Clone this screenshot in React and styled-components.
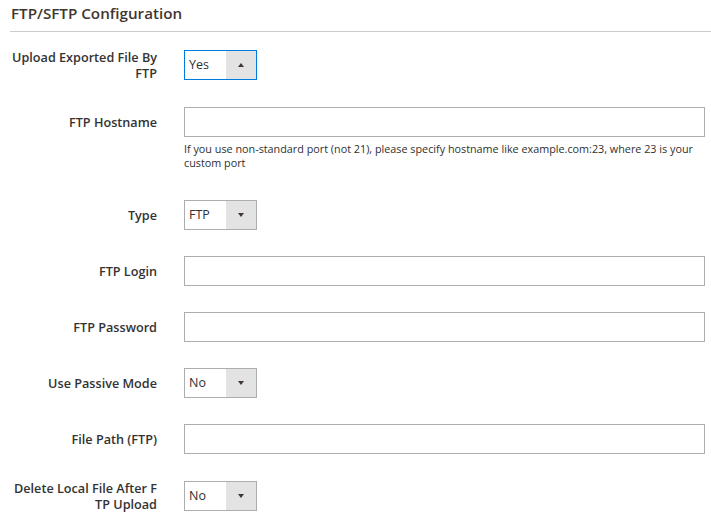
import React from 'react'
import styled, { createGlobalStyle } from 'styled-components'

const GlobalStyle = createGlobalStyle`
  html, body {
    margin: 0;
    padding: 0;
    background: #ffffff;
  }
  body {
    font-family: "Open Sans", "Liberation Sans", sans-serif;
    color: #303030;
  }
`

const Section = styled.div`
  width: 711px;
  padding: 0 6px 0 9px;
  box-sizing: border-box;
`

const Title = styled.div`
  font-size: 15.2px;
  font-weight: 600;
  color: #41362f;
  line-height: 20px;
  padding: 3px 0 8px 1px;
  border-bottom: 1px solid #cccccc;
  margin-left: 1px;
  margin-right: -6px;
`

const Form = styled.div`
  display: flex;
  flex-direction: column;
  gap: 26px;
  padding-top: 17px;
`

const Row = styled.div`
  display: grid;
  grid-template-columns: 148px 1fr;
  column-gap: 27px;
  align-items: center;
`

const Label = styled.label`
  font-size: 12.65px;
  font-weight: 600;
  line-height: 16px;
  color: #333333;
  text-align: right;
  word-break: break-all;
  align-self: ${p => (p.top ? 'start' : 'center')};
  padding-top: ${p => (p.top ? '7px' : '0')};
`

const Field = styled.div`
  display: flex;
  flex-direction: column;
`

const Input = styled.input`
  box-sizing: border-box;
  width: 521px;
  height: 30px;
  border: 1px solid #adadad;
  background: #fff;
  padding: 0 8px;
  font-family: inherit;
  font-size: 12px;
  outline: none;
`

const Note = styled.div`
  font-size: 10.8px;
  line-height: 14px;
  color: #303030;
  margin-top: 5px;
  padding-bottom: 4px;
`

const Select = styled.div`
  box-sizing: border-box;
  width: 73px;
  height: 30px;
  display: flex;
  border: 1px solid ${p => (p.active ? '#007bdb' : '#adadad')};
  background: #fff;
`

const Value = styled.div`
  flex: 1;
  font-size: 12.5px;
  line-height: 28px;
  padding-left: 4px;
  color: #303030;
`

const Arrow = styled.div`
  width: 30px;
  background: #e3e3e3;
  display: flex;
  align-items: center;
  justify-content: center;
  &::after {
    content: '';
    width: 0;
    height: 0;
    border-left: 3.5px solid transparent;
    border-right: 3.5px solid transparent;
    ${p =>
      p.up
        ? 'border-bottom: 4px solid #41362f;'
        : 'border-top: 4px solid #41362f;'}
  }
`

function Dropdown({ value, active }) {
  return (
    <Select active={active}>
      <Value>{value}</Value>
      <Arrow up={active} />
    </Select>
  )
}

function App() {
  return (
    <Section>
      <GlobalStyle />
      <Title>FTP/SFTP Configuration</Title>
      <Form>
        <Row>
          <Label>Upload Exported File By FTP</Label>
          <Dropdown value="Yes" active />
        </Row>
        <Row>
          <Label top>FTP Hostname</Label>
          <Field>
            <Input type="text" />
            <Note>
              If you use non-standard port (not 21), please specify hostname like example.com:23, where 23 is your custom port
            </Note>
          </Field>
        </Row>
        <Row>
          <Label>Type</Label>
          <Dropdown value="FTP" />
        </Row>
        <Row>
          <Label>FTP Login</Label>
          <Input type="text" />
        </Row>
        <Row>
          <Label>FTP Password</Label>
          <Input type="password" />
        </Row>
        <Row>
          <Label>Use Passive Mode</Label>
          <Dropdown value="No" />
        </Row>
        <Row>
          <Label>File Path (FTP)</Label>
          <Input type="text" />
        </Row>
        <Row>
          <Label>Delete Local File After FTP Upload</Label>
          <Dropdown value="No" />
        </Row>
      </Form>
    </Section>
  )
}

export default App
